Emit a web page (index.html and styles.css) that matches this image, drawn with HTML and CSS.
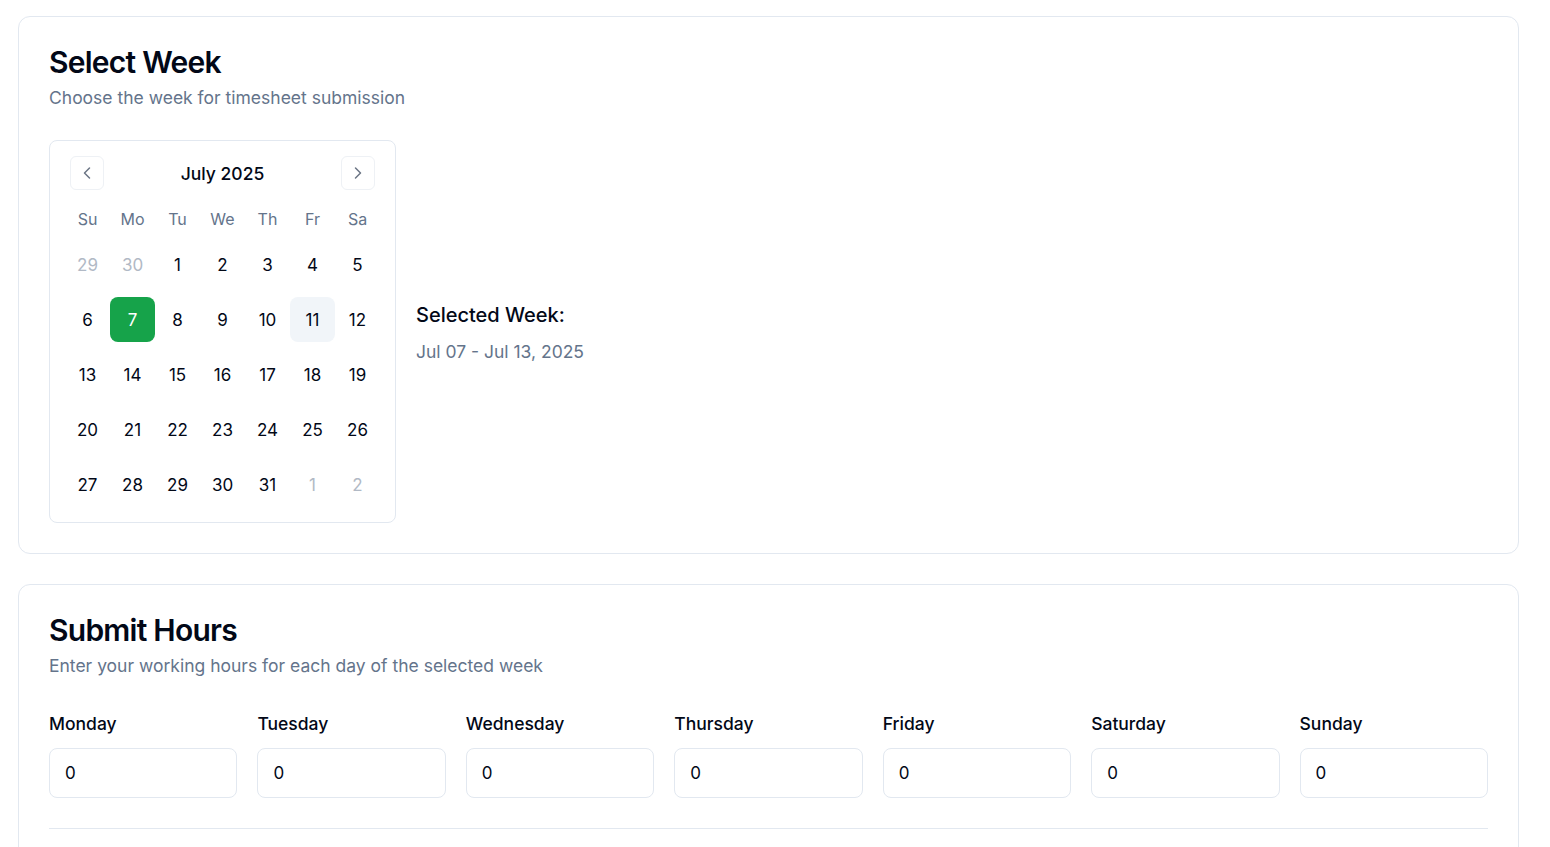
FILE: index.html
```html
<!DOCTYPE html>
<html lang="en">
<head>
<meta charset="utf-8">
<title>Timesheet</title>
<link rel="stylesheet" href="styles.css">
</head>
<body>
<div class="page">
  <section class="card">
    <h2 class="card-title">Select Week</h2>
    <p class="card-desc">Choose the week for timesheet submission</p>
    <div class="week-row">
      <div class="calendar">
        <div class="caption">
          <button class="nav-btn" aria-label="Previous month">
            <svg width="20" height="20" viewBox="0 0 24 24" fill="none" stroke="currentColor" stroke-width="1.8" stroke-linecap="round" stroke-linejoin="round"><path d="M15 18l-6-6 6-6"/></svg>
          </button>
          <div class="month">July 2025</div>
          <button class="nav-btn" aria-label="Next month">
            <svg width="20" height="20" viewBox="0 0 24 24" fill="none" stroke="currentColor" stroke-width="1.8" stroke-linecap="round" stroke-linejoin="round"><path d="M9 18l6-6-6-6"/></svg>
          </button>
        </div>
        <div class="weekdays">
          <span>Su</span><span>Mo</span><span>Tu</span><span>We</span><span>Th</span><span>Fr</span><span>Sa</span>
        </div>
        <div class="days">
          <span class="day outside">29</span><span class="day outside">30</span><span class="day">1</span><span class="day">2</span><span class="day">3</span><span class="day">4</span><span class="day">5</span>
          <span class="day">6</span><span class="day selected">7</span><span class="day">8</span><span class="day">9</span><span class="day">10</span><span class="day today">11</span><span class="day">12</span>
          <span class="day">13</span><span class="day">14</span><span class="day">15</span><span class="day">16</span><span class="day">17</span><span class="day">18</span><span class="day">19</span>
          <span class="day">20</span><span class="day">21</span><span class="day">22</span><span class="day">23</span><span class="day">24</span><span class="day">25</span><span class="day">26</span>
          <span class="day">27</span><span class="day">28</span><span class="day">29</span><span class="day">30</span><span class="day">31</span><span class="day outside">1</span><span class="day outside">2</span>
        </div>
      </div>
      <div class="selected-info">
        <div class="selected-label">Selected Week:</div>
        <div class="selected-range">Jul 07 - Jul 13, 2025</div>
      </div>
    </div>
  </section>

  <section class="card card-hours">
    <h2 class="card-title">Submit Hours</h2>
    <p class="card-desc">Enter your working hours for each day of the selected week</p>
    <div class="hours-grid">
      <label class="field"><span class="field-label">Monday</span><input class="field-input" type="text" value="0"></label>
      <label class="field"><span class="field-label">Tuesday</span><input class="field-input" type="text" value="0"></label>
      <label class="field"><span class="field-label">Wednesday</span><input class="field-input" type="text" value="0"></label>
      <label class="field"><span class="field-label">Thursday</span><input class="field-input" type="text" value="0"></label>
      <label class="field"><span class="field-label">Friday</span><input class="field-input" type="text" value="0"></label>
      <label class="field"><span class="field-label">Saturday</span><input class="field-input" type="text" value="0"></label>
      <label class="field"><span class="field-label">Sunday</span><input class="field-input" type="text" value="0"></label>
    </div>
    <div class="divider"></div>
  </section>
</div>
</body>
</html>
```

FILE: styles.css
```css
* { box-sizing: border-box; }
html, body { margin: 0; padding: 0; background: #ffffff; }
body {
  font-family: Inter, "Noto Sans", "Liberation Sans", sans-serif;
  color: #020817;
}
.page {
  padding: 16px 31px 40px 18px;
}
.card {
  border: 1px solid #e2e8f0;
  border-radius: 12px;
  background: #fff;
  padding: 27px 30px 30px 30px;
}
.card-hours { margin-top: 30px; padding-bottom: 80px; }
.card-title {
  margin: 0;
  font-size: 30px;
  line-height: 36px;
  font-weight: 600;
  letter-spacing: -0.025em;
  color: #020817;
}
.card-desc {
  margin: 6px 0 0 0;
  font-size: 17.5px;
  line-height: 24px;
  color: #64748b;
}
.week-row {
  margin-top: 30px;
  display: flex;
  align-items: center;
  gap: 20px;
}
.calendar {
  width: 347px;
  border: 1px solid #e2e8f0;
  border-radius: 8px;
  padding: 15px;
}
.caption {
  height: 34px;
  padding: 0 5px;
  display: flex;
  align-items: center;
  justify-content: space-between;
}
.nav-btn {
  width: 34px;
  height: 34px;
  border: 1px solid #eef1f5;
  border-radius: 6px;
  background: #fff;
  color: #6b7585;
  display: flex;
  align-items: center;
  justify-content: center;
  padding: 0;
}
.month {
  font-size: 17.5px;
  line-height: 24px;
  padding-top: 1px;
  font-weight: 500;
  color: #020817;
}
.weekdays {
  margin-top: 16px;
  height: 26px;
  display: grid;
  grid-template-columns: repeat(7, 45px);
  align-items: center;
  justify-items: center;
  font-size: 16px;
  color: #64748b;
}
.days {
  margin-top: 10px;
  display: grid;
  grid-template-columns: repeat(7, 45px);
  grid-auto-rows: 45px;
  row-gap: 10px;
}
.day {
  display: flex;
  align-items: center;
  justify-content: center;
  font-size: 17px;
  color: #020817;
  border-radius: 8px;
}
.day.outside { color: #b1b9c5; }
.day.selected { background: #16a34a; color: #fff; }
.day.today { background: #f1f5f9; }
.selected-info { display: flex; flex-direction: column; padding-top: 2px; }
.selected-label {
  font-size: 20px;
  line-height: 26px;
  font-weight: 500;
  color: #020817;
}
.selected-range {
  margin-top: 12px;
  font-size: 17.5px;
  line-height: 24px;
  color: #64748b;
}
.hours-grid {
  margin-top: 34px;
  display: grid;
  grid-template-columns: repeat(7, 1fr);
  gap: 20px;
}
.field { display: flex; flex-direction: column; }
.field-label {
  font-size: 17.5px;
  line-height: 24px;
  font-weight: 500;
  color: #020817;
}
.field-input {
  margin-top: 12px;
  width: 100%;
  height: 50px;
  border: 1px solid #e2e8f0;
  border-radius: 8px;
  padding: 0 15px;
  font-family: inherit;
  font-size: 17px;
  color: #020817;
  background: #fff;
  outline: none;
}
.divider {
  margin-top: 30px;
  height: 1px;
  background: #e2e8f0;
}
```
